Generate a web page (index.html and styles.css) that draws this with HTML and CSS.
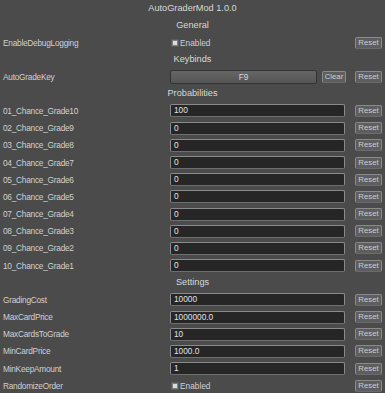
FILE: index.html
```html
<!DOCTYPE html>
<html>
<head>
<meta charset="utf-8">
<link rel="stylesheet" href="styles.css">
</head>
<body>
<div class="panel">
  <div class="title">AutoGraderMod 1.0.0</div>
  <div class="section">General</div>
  <div class="row">
    <div class="label">EnableDebugLogging</div>
    <div class="toggle"><span class="box"></span>Enabled</div>
    <button class="btn reset">Reset</button>
  </div>
  <div class="section">Keybinds</div>
  <div class="row">
    <div class="label">AutoGradeKey</div>
    <div class="keycell">
      <button class="btn key">F9</button>
      <button class="btn clear">Clear</button>
    </div>
    <button class="btn reset">Reset</button>
  </div>
  <div class="section">Probabilities</div>
  <div class="row"><div class="label">01_Chance_Grade10</div><div class="field">100</div><button class="btn reset">Reset</button></div>
  <div class="row"><div class="label">02_Chance_Grade9</div><div class="field">0</div><button class="btn reset">Reset</button></div>
  <div class="row"><div class="label">03_Chance_Grade8</div><div class="field">0</div><button class="btn reset">Reset</button></div>
  <div class="row"><div class="label">04_Chance_Grade7</div><div class="field">0</div><button class="btn reset">Reset</button></div>
  <div class="row"><div class="label">05_Chance_Grade6</div><div class="field">0</div><button class="btn reset">Reset</button></div>
  <div class="row"><div class="label">06_Chance_Grade5</div><div class="field">0</div><button class="btn reset">Reset</button></div>
  <div class="row"><div class="label">07_Chance_Grade4</div><div class="field">0</div><button class="btn reset">Reset</button></div>
  <div class="row"><div class="label">08_Chance_Grade3</div><div class="field">0</div><button class="btn reset">Reset</button></div>
  <div class="row"><div class="label">09_Chance_Grade2</div><div class="field">0</div><button class="btn reset">Reset</button></div>
  <div class="row"><div class="label">10_Chance_Grade1</div><div class="field">0</div><button class="btn reset">Reset</button></div>
  <div class="section">Settings</div>
  <div class="row"><div class="label">GradingCost</div><div class="field">10000</div><button class="btn reset">Reset</button></div>
  <div class="row"><div class="label">MaxCardPrice</div><div class="field">1000000.0</div><button class="btn reset">Reset</button></div>
  <div class="row"><div class="label">MaxCardsToGrade</div><div class="field">10</div><button class="btn reset">Reset</button></div>
  <div class="row"><div class="label">MinCardPrice</div><div class="field">1000.0</div><button class="btn reset">Reset</button></div>
  <div class="row"><div class="label">MinKeepAmount</div><div class="field">1</div><button class="btn reset">Reset</button></div>
  <div class="row">
    <div class="label">RandomizeOrder</div>
    <div class="toggle"><span class="box"></span>Enabled</div>
    <button class="btn reset">Reset</button>
  </div>
</div>
</body>
</html>
```
FILE: styles.css
```css
html, body {
  margin: 0;
  padding: 0;
  background: #4b4b4b;
}
body {
  width: 385px;
  height: 393px;
  overflow: hidden;
  font-family: "Liberation Sans", Arial, sans-serif;
  font-size: 8.3px;
  color: #d0d0d0;
}
.panel {
  display: flex;
  flex-direction: column;
  padding: 0 3px;
}
.title, .section {
  height: 17px;
  line-height: 17px;
  text-align: center;
  font-size: 9.2px;
  color: #d8d8d8;
}
.row {
  height: 17.2px;
  display: grid;
  grid-template-columns: 167px 1fr 27px;
  align-items: center;
}
.label {
  white-space: nowrap;
  letter-spacing: -0.25px;
}
.toggle {
  display: flex;
  align-items: center;
  gap: 2px;
  padding-left: 2px;
  margin-right: 10px;
}
.box {
  width: 4px;
  height: 4px;
  background: #dcdcdc;
  border: 1px solid #7e7e7e;
  box-shadow: 0 0 0 1px #5a5a5a;
}
.field {
  height: 13px;
  box-sizing: border-box;
  margin-right: 10px;
  background: #262626;
  border: 1px solid #8a8a8a;
  border-bottom-color: #6e6e6e;
  border-radius: 2px;
  padding-left: 3px;
  line-height: 11px;
  color: #e2e2e2;
}
.keycell {
  display: flex;
  align-items: center;
  gap: 5px;
  margin-right: 9px;
}
.btn {
  font-family: inherit;
  font-size: 7.8px;
  color: #cdcdcd;
  height: 12px;
  padding: 0;
  box-sizing: border-box;
  line-height: 10px;
  border-radius: 2px;
  cursor: default;
}
.reset, .clear {
  background: #5e5e5e;
  border: 1px solid #8a8a8a;
  border-bottom-color: #6a6a6a;
}
.clear {
  width: 24px;
}
.key {
  flex: 1;
  height: 14px;
  background: linear-gradient(#666, #555);
  border: 1px solid #333;
  font-size: 8.3px;
  color: #d8d8d8;
}
```
